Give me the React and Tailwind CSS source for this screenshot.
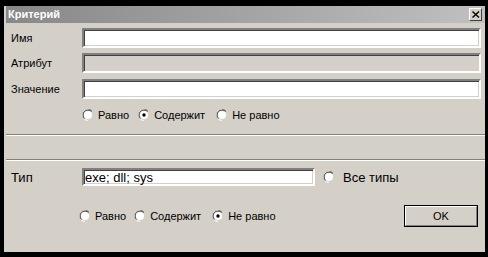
import React from 'react';

const font = { fontFamily: '"Liberation Sans", Arial, sans-serif' };

function Radio({ checked }) {
  return (
    <svg width="12" height="12" viewBox="0 0 12 12" className="shrink-0">
      <path d="M10 2A5.5 5.5 0 0 0 2 10" stroke="#808080" strokeWidth="1" fill="none" />
      <circle cx="6" cy="6" r="5.5" fill="none" stroke="#ffffff" strokeWidth="1" strokeDasharray="17.3 17.3" strokeDashoffset="-8.6" />
      <path d="M9.5 2.5A4.5 4.5 0 0 0 2.5 9.5" stroke="#404040" strokeWidth="1" fill="none" />
      <circle cx="6" cy="6" r="4" fill="#ffffff" />
      {checked && <circle cx="6" cy="6" r="1.7" fill="#000000" />}
    </svg>
  );
}

function Option({ checked, label, className = '', textClass = 'text-[11px]' }) {
  return (
    <div className={`flex items-center gap-[4px] ${className}`}>
      <Radio checked={checked} />
      <span className={`${textClass} leading-none text-black`}>{label}</span>
    </div>
  );
}

const sunken =
  'border-2 border-t-[#808080] border-l-[#808080] border-r-white border-b-white shadow-[inset_1px_1px_0_#404040,inset_-1px_-1px_0_#d4d0c8]';

function Field({ label, disabled, className = 'mt-[5px]' }) {
  return (
    <div className={`flex items-center h-[20px] ${className}`}>
      <span className="w-[76px] pl-[5px] text-[11px] leading-none text-black">{label}</span>
      <div className={`flex-1 h-full ${sunken} ${disabled ? 'bg-[#d4d0c8]' : 'bg-white'}`} />
    </div>
  );
}

function Separator({ className }) {
  return <div className={`h-[2px] border-t border-t-[#808080] border-b border-b-white ${className}`} />;
}

export default function App() {
  return (
    <div className="w-[488px] h-[257px] bg-black pt-[6px] pl-[4px] pr-[3px] pb-[5px]" style={font}>
      <div className="h-full bg-[#d4d0c8] pl-[2px] flex flex-col">
        {/* Title bar */}
        <div className="h-[17px] flex items-center justify-between pl-[2px] pr-[3px] bg-gradient-to-r from-[#888888] to-[#c0c0c0]">
          <span className="text-white font-bold text-[11px] leading-none">Критерий</span>
          <div className="w-[13px] h-[13px] bg-[#d4d0c8] border border-t-white border-l-white border-r-[#404040] border-b-[#404040] flex items-center justify-center">
            <svg width="8" height="7" viewBox="0 0 8 7">
              <path d="M0.5 0.5L7 6.5M7 0.5L0.5 6.5" stroke="#000" strokeWidth="1.4" />
            </svg>
          </div>
        </div>

        {/* Upper fields */}
        <div className="pr-[4px]">
          <Field label="Имя" className="mt-[5px]" />
          <Field label="Атрибут" disabled />
          <Field label="Значение" className="mt-[6px]" />
          <div className="flex items-center h-[14px] mt-[9px] pl-[76px]">
            <Option label="Равно" />
            <Option label="Содержит" checked className="ml-[9px]" />
            <Option label="Не равно" className="ml-[11px]" />
          </div>
        </div>

        <Separator className="mt-[12px]" />
        <Separator className="mt-[23px]" />

        {/* Type row */}
        <div className="flex items-center h-[18px] mt-[7px]">
          <span className="w-[76px] pl-[5px] text-[13px] leading-none text-black">Тип</span>
          <div className={`w-[233px] h-full bg-white ${sunken} flex items-center pl-[1px]`}>
            <span className="text-[13px] leading-none text-black">exe; dll; sys</span>
          </div>
          <Option label="Все типы" textClass="text-[13px]" className="ml-[8px] gap-[8px]" />
        </div>

        {/* Bottom row */}
        <div className="flex items-center h-[22px] mt-[19px] pl-[73px] pr-[7px]">
          <Option label="Равно" />
          <Option label="Содержит" className="ml-[8px]" />
          <Option label="Не равно" checked className="ml-[11px]" />
          <div className="ml-auto w-[74px] h-full border border-black">
            <div className="w-full h-full border border-t-white border-l-white border-r-[#808080] border-b-[#808080] flex items-center justify-center">
              <span className="text-[11px] leading-none text-black">OK</span>
            </div>
          </div>
        </div>
      </div>
    </div>
  );
}
